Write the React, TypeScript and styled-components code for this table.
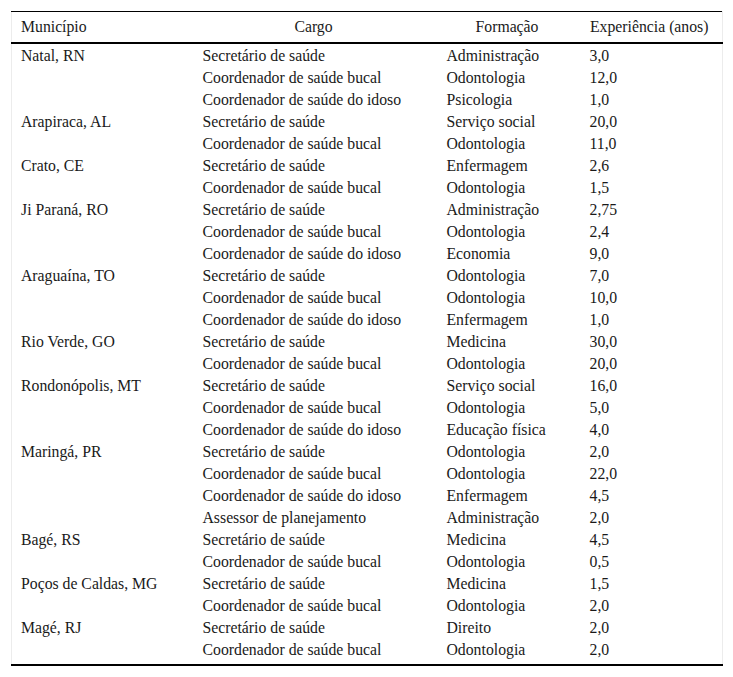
import React from 'react';
import styled, { createGlobalStyle } from 'styled-components';

const GlobalStyle = createGlobalStyle`
  html, body {
    margin: 0;
    padding: 0;
    background: #ffffff;
  }
  body {
    font-family: "Liberation Serif", "Times New Roman", serif;
    color: #1a1a1a;
  }
`;

const Page = styled.div`
  padding: 11px 11px 0 11px;
  width: 711px;
`;

const Table = styled.table`
  width: 711px;
  border-collapse: collapse;
  table-layout: fixed;
  border-top: 1px solid #000;
  border-bottom: 2px solid #000;
  border-left: 1px solid #ececec;
  border-right: 1px solid #ececec;
  font-family: "Liberation Serif", "Times New Roman", serif;
  font-size: 15.75px;
  color: #1a1a1a;
`;

const HeadCell = styled.th<{ $align?: 'left' | 'center' }>`
  font-weight: normal;
  text-align: ${(p) => p.$align || 'center'};
  padding: 0 13px 0 9px;
  height: 30px;
  line-height: 30px;
  border-bottom: 2px solid #000;
  white-space: nowrap;
`;

const Cell = styled.td`
  padding: 1px 10px 0 9px;
  height: 21px;
  line-height: 21px;
  white-space: nowrap;
  vertical-align: middle;
`;

const LastRow = styled.tr`
  td {
    padding-bottom: 4px;
  }
`;

type Row = [string, string, string, string];

const rows: Row[] = [
  ['Natal, RN', 'Secretário de saúde', 'Administração', '3,0'],
  ['', 'Coordenador de saúde bucal', 'Odontologia', '12,0'],
  ['', 'Coordenador de saúde do idoso', 'Psicologia', '1,0'],
  ['Arapiraca, AL', 'Secretário de saúde', 'Serviço social', '20,0'],
  ['', 'Coordenador de saúde bucal', 'Odontologia', '11,0'],
  ['Crato, CE', 'Secretário de saúde', 'Enfermagem', '2,6'],
  ['', 'Coordenador de saúde bucal', 'Odontologia', '1,5'],
  ['Ji Paraná, RO', 'Secretário de saúde', 'Administração', '2,75'],
  ['', 'Coordenador de saúde bucal', 'Odontologia', '2,4'],
  ['', 'Coordenador de saúde do idoso', 'Economia', '9,0'],
  ['Araguaína, TO', 'Secretário de saúde', 'Odontologia', '7,0'],
  ['', 'Coordenador de saúde bucal', 'Odontologia', '10,0'],
  ['', 'Coordenador de saúde do idoso', 'Enfermagem', '1,0'],
  ['Rio Verde, GO', 'Secretário de saúde', 'Medicina', '30,0'],
  ['', 'Coordenador de saúde bucal', 'Odontologia', '20,0'],
  ['Rondonópolis, MT', 'Secretário de saúde', 'Serviço social', '16,0'],
  ['', 'Coordenador de saúde bucal', 'Odontologia', '5,0'],
  ['', 'Coordenador de saúde do idoso', 'Educação física', '4,0'],
  ['Maringá, PR', 'Secretário de saúde', 'Odontologia', '2,0'],
  ['', 'Coordenador de saúde bucal', 'Odontologia', '22,0'],
  ['', 'Coordenador de saúde do idoso', 'Enfermagem', '4,5'],
  ['', 'Assessor de planejamento', 'Administração', '2,0'],
  ['Bagé, RS', 'Secretário de saúde', 'Medicina', '4,5'],
  ['', 'Coordenador de saúde bucal', 'Odontologia', '0,5'],
  ['Poços de Caldas, MG', 'Secretário de saúde', 'Medicina', '1,5'],
  ['', 'Coordenador de saúde bucal', 'Odontologia', '2,0'],
  ['Magé, RJ', 'Secretário de saúde', 'Direito', '2,0'],
  ['', 'Coordenador de saúde bucal', 'Odontologia', '2,0'],
];

export default function App() {
  return (
    <Page>
      <GlobalStyle />
      <Table>
        <colgroup>
          <col style={{ width: 182 }} />
          <col style={{ width: 244 }} />
          <col style={{ width: 143 }} />
          <col style={{ width: 142 }} />
        </colgroup>
        <thead>
          <tr>
            <HeadCell $align="left">Município</HeadCell>
            <HeadCell>Cargo</HeadCell>
            <HeadCell>Formação</HeadCell>
            <HeadCell>Experiência (anos)</HeadCell>
          </tr>
        </thead>
        <tbody>
          {rows.map((r, i) => {
            const cells = r.map((c, j) => <Cell key={j}>{c}</Cell>);
            return i === rows.length - 1 ? (
              <LastRow key={i}>{cells}</LastRow>
            ) : (
              <tr key={i}>{cells}</tr>
            );
          })}
        </tbody>
      </Table>
    </Page>
  );
}
